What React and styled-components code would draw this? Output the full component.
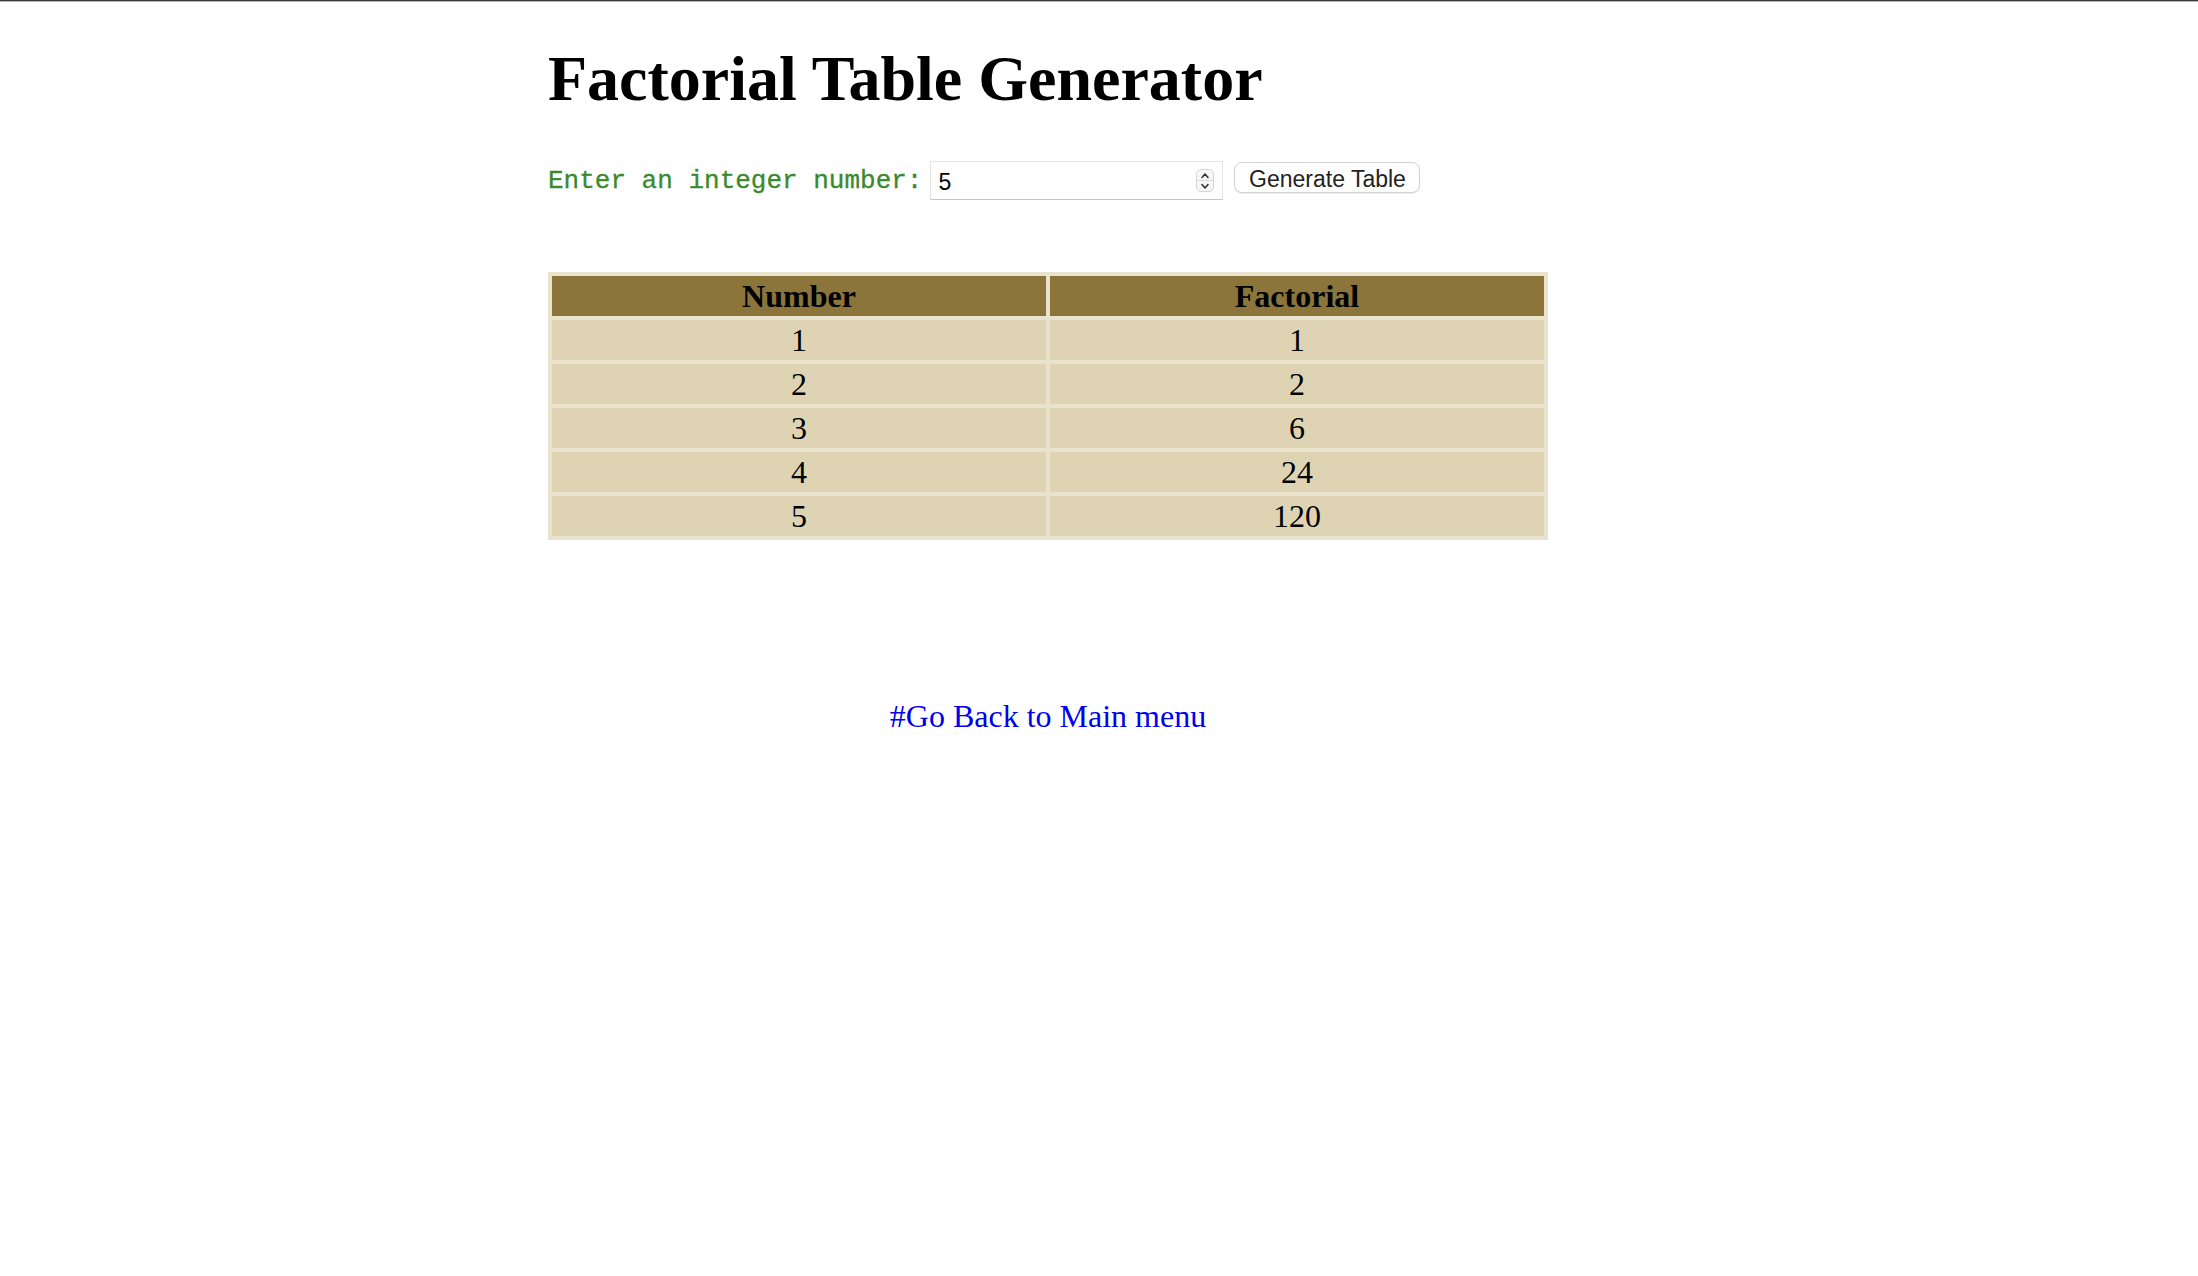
import React, { useState } from 'react';
import styled, { createGlobalStyle } from 'styled-components';

const GlobalStyle = createGlobalStyle`
  html, body {
    margin: 0;
    padding: 0;
    background: #fff;
  }
  body {
    font-family: 'Liberation Serif', 'Times New Roman', serif;
    color: #000;
  }
`;

const TopRule = styled.div`
  height: 1px;
  background: #3a3a3a;
  border-bottom: 1px solid #b5b5b5;
`;

const Main = styled.main`
  margin-left: 548px;
  width: 1000px;
`;

const Title = styled.h1`
  font-family: 'Liberation Serif', 'Times New Roman', serif;
  font-size: 64px;
  font-weight: 700;
  line-height: 71px;
  margin: 41px 0 47px 0;
`;

const Form = styled.form`
  display: flex;
  align-items: center;
  gap: 8px;
`;

const Label = styled.label`
  font-family: 'Liberation Mono', 'Courier New', monospace;
  font-size: 26px;
  color: #3a8a2c;
  white-space: nowrap;
  -webkit-text-stroke: 0.3px #3a8a2c;
`;

const InputBox = styled.div`
  display: flex;
  align-items: center;
  width: 293px;
  height: 39px;
  box-sizing: border-box;
  border: 1px solid #e4e4e4;
  border-bottom-color: #c4c4c4;
  background: #fff;
  padding: 0 8px 0 7px;
`;

const NumberInput = styled.input`
  flex: 1;
  min-width: 0;
  border: none;
  outline: none;
  background: transparent;
  font-family: 'Liberation Sans', Arial, sans-serif;
  font-size: 23px;
  color: #000;
  padding: 3px 0 0 0;
`;

const Spinner = styled.div`
  width: 18px;
  height: 23px;
  box-sizing: border-box;
  border: 1px solid #d6d6d6;
  border-radius: 5px;
  background: #f6f6f6;
  display: flex;
  flex-direction: column;
  cursor: pointer;
`;

const SpinHalf = styled.div`
  flex: 1;
  display: flex;
  align-items: center;
  justify-content: center;
  border-top: ${p => (p.$bottom ? '1px solid #dcdcdc' : 'none')};
`;

const Button = styled.button`
  align-self: flex-start;
  margin: 1px 0 0 3px;
  width: 186px;
  height: 31px;
  box-sizing: border-box;
  border: 1px solid #d2d2d2;
  border-radius: 8px;
  background: #fff;
  box-shadow: 0 1px 1px rgba(0, 0, 0, 0.08);
  font-family: 'Liberation Sans', Arial, sans-serif;
  font-size: 23px;
  color: #222;
  padding: 3px 0 0 0;
  cursor: pointer;
`;

const Table = styled.table`
  margin-top: 72px;
  width: 1000px;
  border-spacing: 4px;
  background: #e9e2cd;
  table-layout: fixed;
`;

const Th = styled.th`
  background: #8b753a;
  height: 40px;
  padding: 0;
  font-size: 32px;
  font-weight: 700;
  text-align: center;
  color: #000;
`;

const Td = styled.td`
  background: #ded4b4;
  height: 40px;
  padding: 0;
  font-size: 32px;
  text-align: center;
  color: #000;
`;

const Footer = styled.p`
  margin: 158px 0 0 0;
  text-align: center;
  font-size: 32px;
  line-height: 36px;
`;

const BackLink = styled.a`
  color: #0000ee;
  text-decoration: none;
`;

const Chevron = ({ up }) => (
  <svg width="10" height="7" viewBox="0 0 10 7">
    <path
      d={up ? 'M2 5.5 L5 2 L8 5.5' : 'M2 1.5 L5 5 L8 1.5'}
      fill="none"
      stroke="#333"
      strokeWidth="1.6"
      strokeLinecap="round"
      strokeLinejoin="round"
    />
  </svg>
);

const factorial = n => {
  let r = 1;
  for (let i = 2; i <= n; i++) r *= i;
  return r;
};

export default function App() {
  const [value, setValue] = useState('5');
  const [count, setCount] = useState(5);

  const handleSubmit = e => {
    e.preventDefault();
    const n = parseInt(value, 10);
    if (!isNaN(n) && n > 0) setCount(n);
  };

  const step = d => {
    const n = (parseInt(value, 10) || 0) + d;
    setValue(String(n));
  };

  const rows = [];
  for (let i = 1; i <= count; i++) rows.push(i);

  return (
    <>
      <GlobalStyle />
      <TopRule />
      <Main>
        <Title>Factorial Table Generator</Title>
        <Form onSubmit={handleSubmit}>
          <Label htmlFor="num">Enter an integer number:</Label>
          <InputBox>
            <NumberInput id="num" value={value} onChange={e => setValue(e.target.value)} />
            <Spinner>
              <SpinHalf onClick={() => step(1)}>
                <Chevron up />
              </SpinHalf>
              <SpinHalf $bottom onClick={() => step(-1)}>
                <Chevron />
              </SpinHalf>
            </Spinner>
          </InputBox>
          <Button type="submit">Generate Table</Button>
        </Form>
        <Table>
          <thead>
            <tr>
              <Th>Number</Th>
              <Th>Factorial</Th>
            </tr>
          </thead>
          <tbody>
            {rows.map(n => (
              <tr key={n}>
                <Td>{n}</Td>
                <Td>{factorial(n)}</Td>
              </tr>
            ))}
          </tbody>
        </Table>
        <Footer>
          <BackLink href="#">#Go Back to Main menu</BackLink>
        </Footer>
      </Main>
    </>
  );
}
